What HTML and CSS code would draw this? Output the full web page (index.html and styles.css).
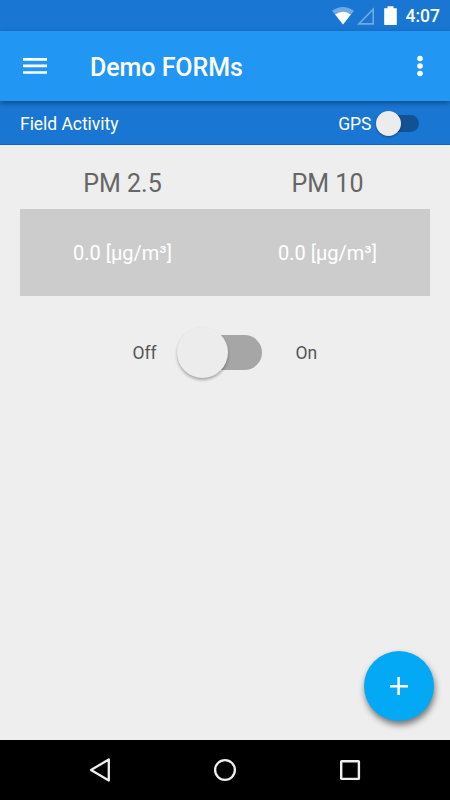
FILE: index.html
```html
<!DOCTYPE html>
<html lang="en">
<head>
<meta charset="utf-8">
<title>Demo FORMs</title>
<link rel="stylesheet" href="styles.css">
</head>
<body>
<div class="screen">
  <div class="status-bar">
    <svg class="status-icons" width="70" height="31" viewBox="0 0 70 31">
      <path d="M2 10.800Q13 3 24 10.800L13 24.500Z" fill="#fff" fill-opacity=".38"/>
      <path d="M5.200 14.400Q13 9 20.800 14.400L13 24.500Z" fill="#fff"/>
      <path d="M28.800 23.900H43.200V9.200Z" fill="none" stroke="#fff" stroke-opacity=".38" stroke-width="1.600"/>
      <path d="M57.500 6.200h6v2H66.800v16.700H54.200V8.200H57.500Z" fill="#fff"/>
    </svg>
    <span class="clock">4:07</span>
  </div>
  <header class="app-bar">
    <svg class="menu-icon" width="24" height="16" viewBox="0 0 24 16"><path d="M0 1.400h24M0 7.900h24M0 14.500h24" stroke="#fff" stroke-width="2.600"/></svg>
    <h1 class="title">Demo FORMs</h1>
    <svg class="more-icon" width="6" height="22" viewBox="0 0 6 22"><g fill="#fff"><circle cx="3" cy="3.500" r="2.800"/><circle cx="3" cy="11" r="2.800"/><circle cx="3" cy="18.500" r="2.800"/></g></svg>
  </header>
  <div class="sub-bar">
    <span class="section-name">Field Activity</span>
    <div class="gps">
      <span>GPS</span>
      <div class="switch switch-small"><div class="thumb"></div></div>
    </div>
  </div>
  <main class="content">
    <div class="row headings"><span>PM 2.5</span><span>PM 10</span></div>
    <div class="row values"><span>0.0 [µg/m³]</span><span>0.0 [µg/m³]</span></div>
    <div class="power">
      <span class="label-off">Off</span>
      <div class="switch switch-large"><div class="thumb"></div></div>
      <span class="label-on">On</span>
    </div>
  </main>
  <div class="fab">
    <svg width="18" height="18" viewBox="0 0 18 18"><path d="M8.600 0v18M0 9.300h18" stroke="#fff" stroke-width="2.500"/></svg>
  </div>
  <nav class="nav-bar">
    <svg width="24" height="26" viewBox="0 0 24 26"><path d="M20.800 2.500v21L3 13Z" fill="none" stroke="#eee" stroke-width="2.300" stroke-linejoin="round"/></svg>
    <svg width="24" height="26" viewBox="0 0 24 26"><circle cx="12" cy="13" r="9.900" fill="none" stroke="#eee" stroke-width="2.300"/></svg>
    <svg width="24" height="26" viewBox="0 0 24 26"><rect x="3.200" y="4.200" width="17.700" height="17.700" rx=".5" fill="none" stroke="#eee" stroke-width="2.400"/></svg>
  </nav>
</div>
</body>
</html>
```
FILE: styles.css
```css
* { box-sizing: border-box; }
body { margin: 0; font-family: Roboto, sans-serif; }
svg { display: block; flex: none; }
.screen {
  position: relative;
  display: flex;
  flex-direction: column;
  width: 450px;
  height: 800px;
  background: #eee;
  overflow: hidden;
}
.status-bar {
  display: flex;
  justify-content: flex-end;
  height: 31px;
  padding-right: 10px;
  background: #1976d2;
  color: #fff;
}
.status-icons { margin-right: 6px; }
.clock { font-size: 17.5px; font-weight: 500; line-height: 33px; }
.app-bar {
  position: relative;
  z-index: 1;
  display: flex;
  align-items: center;
  height: 70px;
  padding: 0 27px 0 23px;
  background: #2196f3;
  color: #fff;
  box-shadow: 0 2px 5px rgba(0, 0, 0, .35);
}
.title { margin: 3px auto 0 43px; font-size: 25px; font-weight: 500; line-height: 30px; letter-spacing: -.05px; }
.sub-bar {
  display: flex;
  align-items: center;
  justify-content: space-between;
  height: 44px;
  padding: 2px 31px 0 20px;
  border-bottom: 1px solid #1264cb;
  background: #1976d2;
  color: #fff;
  font-size: 17.5px;
  line-height: 22px;
}
.section-name { letter-spacing: -.04px; }
.gps { display: flex; align-items: center; gap: 4.5px; }
.switch { display: flex; align-items: center; }
.switch::after { content: ""; }
.thumb { flex: none; z-index: 1; border-radius: 50%; background: #ececec; }
.switch-small { width: 43px; height: 25px; }
.switch-small .thumb {
  width: 25px;
  height: 25px;
  box-shadow: 0 1px 2px rgba(0, 0, 0, .35);
}
.switch-small::after {
  width: 31px;
  height: 17px;
  margin-left: -13px;
  border-radius: 9px;
  background: #115293;
}
.content { flex: 1; padding: 22px 20px 0; }
.row { display: grid; grid-template-columns: 1fr 1fr; text-align: center; }
.headings { height: 42px; font-size: 25px; line-height: 33px; color: #666; }
.values { height: 87px; background: #ccc; color: #fff; font-size: 20px; line-height: 89px; }
.power {
  display: flex;
  align-items: center;
  height: 51px;
  margin-top: 31px;
  padding-left: 112.5px;
  color: #555;
  font-size: 17.5px;
}
.label-off, .label-on { padding-top: 1px; }
.label-off { width: 44px; }
.label-on { margin-left: 34px; }
.switch-large { width: 85px; height: 51px; }
.switch-large .thumb {
  width: 51px;
  height: 51px;
  box-shadow: 0 2px 3px rgba(0, 0, 0, .3);
}
.switch-large::after {
  width: 60px;
  height: 35px;
  margin-left: -26px;
  border-radius: 18px;
  background: #a6a6a6;
}
.fab {
  position: absolute;
  left: 364px;
  top: 651px;
  display: flex;
  align-items: center;
  justify-content: center;
  width: 70px;
  height: 70px;
  border-radius: 50%;
  background: #03a9f4;
  box-shadow: 1px 4px 6px rgba(0, 0, 0, .5);
}
.nav-bar {
  display: flex;
  align-items: center;
  justify-content: space-between;
  height: 60px;
  padding: 0 88px;
  background: #000;
}
```
